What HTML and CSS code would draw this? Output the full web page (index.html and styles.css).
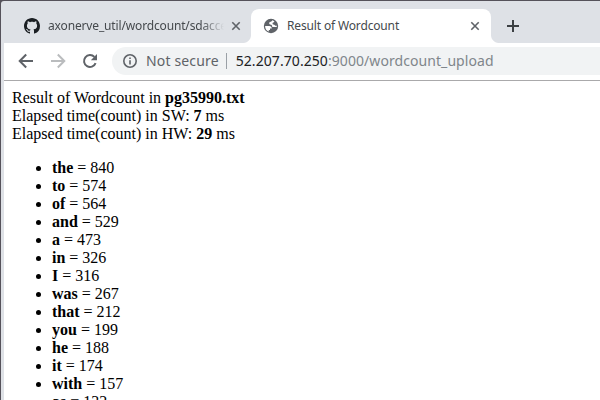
FILE: index.html
```html
<!DOCTYPE html>
<html lang="en">
<head>
<meta charset="utf-8">
<title>Result of Wordcount</title>
<link rel="stylesheet" href="styles.css">
</head>
<body>
<div class="window">
  <header class="tabs">
    <div class="tab">
      <svg class="favicon" viewBox="0 0 16 16"><path fill="#1b1f23" d="M8 0C3.58 0 0 3.58 0 8c0 3.54 2.29 6.53 5.47 7.59.4.07.55-.17.55-.38 0-.19-.01-.82-.01-1.49-2.01.37-2.53-.49-2.69-.94-.09-.23-.48-.94-.82-1.13-.28-.15-.68-.52-.01-.53.63-.01 1.08.58 1.23.82.72 1.21 1.87.87 2.33.66.07-.52.28-.87.51-1.07-1.78-.2-3.64-.89-3.64-3.95 0-.87.31-1.59.82-2.15-.08-.2-.36-1.02.08-2.12 0 0 .67-.21 2.2.82.64-.18 1.32-.27 2-.27s1.36.09 2 .27c1.53-1.04 2.2-.82 2.2-.82.44 1.1.16 1.92.08 2.12.51.56.82 1.27.82 2.15 0 3.07-1.87 3.75-3.65 3.95.29.25.54.73.54 1.48 0 1.07-.01 1.93-.01 2.2 0 .21.15.46.55.38A8.01 8.01 0 0 0 16 8c0-4.42-3.58-8-8-8z"/></svg>
      <span class="tab-title faded">axonerve_util/wordcount/sdaccel</span>
      <svg class="close" viewBox="0 0 10 10"><path d="M1.3 1.3l7.4 7.4M8.7 1.3L1.3 8.7"/></svg>
    </div>
    <div class="tab active">
      <svg class="favicon" viewBox="0 0 16 16"><circle cx="8" cy="8" r="7.2" fill="#5f6368"/><path fill="#fff" d="M9.2 2.2c-.1.9-.7 1.4-1.5 1.5-1.1.1-1.5.8-1.5 1.6 0 1 .8 1.4 1.8 1.5.8.1.9.5 1 1.1.1.8.7 1.2 1.5 1.2h3.2c.1-.6.2-1 .1-1.6-.7.4-1.5.3-1.9-.3-.3-.6-.9-.8-1.6-.8-.5 0-.8-.4-.8-.9 0-.7.4-1 1-1.1.6-.1.8-.5.8-1.2-.6-.5-1.3-.8-2.1-1zM2.1 8h4.1c1.7 0 2.6.9 2.6 2.4H7v1.5H5.8v1.7A6 6 0 0 1 2.1 8z"/></svg>
      <span class="tab-title">Result of Wordcount</span>
      <svg class="close" viewBox="0 0 10 10"><path d="M1.3 1.3l7.4 7.4M8.7 1.3L1.3 8.7"/></svg>
    </div>
    <svg class="new-tab" viewBox="0 0 12 12"><path d="M6 0v12M0 6h12"/></svg>
  </header>
  <nav class="toolbar">
    <svg class="nav-icon" viewBox="0 0 16 16"><path d="M15 8H2M8.2 1.5L1.7 8l6.5 6.5"/></svg>
    <svg class="nav-icon disabled" viewBox="0 0 16 16"><path d="M1 8h13M7.8 1.5L14.3 8l-6.5 6.5"/></svg>
    <svg class="nav-icon" viewBox="0 0 16 16"><path d="M13.6 10.2A6 6 0 1 1 12.4 3.9"/><path class="solid" d="M15 1v6.2H8.8z"/></svg>
    <div class="omnibox">
      <svg class="info" viewBox="0 0 14 14"><circle cx="7" cy="7" r="6.2"/><path d="M7 6.2v4.3M7 3.5v1.6"/></svg>
      <span class="security">Not secure</span>
      <span class="divider"></span>
      <span class="url"><span class="host">52.207.70.250</span>:9000/wordcount_upload</span>
    </div>
  </nav>
  <main class="page">
    Result of Wordcount in <b>pg35990.txt</b><br>
    Elapsed time(count) in SW: <b>7</b> ms<br>
    Elapsed time(count) in HW: <b>29</b> ms
    <ul>
      <li><b>the</b> = 840</li>
      <li><b>to</b> = 574</li>
      <li><b>of</b> = 564</li>
      <li><b>and</b> = 529</li>
      <li><b>a</b> = 473</li>
      <li><b>in</b> = 326</li>
      <li><b>I</b> = 316</li>
      <li><b>was</b> = 267</li>
      <li><b>that</b> = 212</li>
      <li><b>you</b> = 199</li>
      <li><b>he</b> = 188</li>
      <li><b>it</b> = 174</li>
      <li><b>with</b> = 157</li>
      <li><b>as</b> = 132</li>
    </ul>
  </main>
</div>
</body>
</html>
```

FILE: styles.css
```css
* { box-sizing: border-box; }
html { background: #55525a; }
body { margin: 0; height: 400px; overflow: hidden; }
svg { flex: none; fill: none; }
.window {
  height: 400px;
  margin: 1px 0 0 1px;
  padding-left: 3px;
  background: #dee1e6;
  border-radius: 3px 0 0 0;
  overflow: hidden;
}
.tabs {
  display: flex;
  height: 42px;
  padding-top: 8px;
  font: 12px/34px "Noto Sans", sans-serif;
  letter-spacing: -0.15px;
  color: #45494d;
}
.tab { display: flex; align-items: center; width: 247px; padding: 0 10px 0 20px; }
.tab.active {
  position: relative;
  width: 240px;
  padding: 0 11px 0 12px;
  background: #fff;
  border-radius: 8px 8px 0 0;
}
.tab.active::before, .tab.active::after {
  content: "";
  position: absolute;
  bottom: 0;
  width: 8px;
  height: 8px;
}
.tab.active::before { left: -8px; background: radial-gradient(circle at 0 0, transparent 7.5px, #fff 8.5px); }
.tab.active::after { right: -8px; background: radial-gradient(circle at 100% 0, transparent 7.5px, #fff 8.5px); }
.favicon { width: 16px; height: 16px; margin-right: 8px; }
.tab-title { flex: 1; min-width: 0; overflow: hidden; white-space: nowrap; margin-right: 7px; }
.faded { -webkit-mask-image: linear-gradient(to right, #000 153px, transparent 176px); mask-image: linear-gradient(to right, #000 153px, transparent 176px); }
.close { width: 10px; height: 10px; stroke: #5f6368; stroke-width: 1.6; }
.new-tab { width: 12px; height: 12px; margin: 11px 0 0 16px; stroke: #3c4043; stroke-width: 2; }
.toolbar {
  display: flex;
  align-items: center;
  height: 38px;
  padding: 0 0 1px 14px;
  background: #fff;
  border-bottom: 1px solid #aaa9ab;
}
.nav-icon { width: 16px; height: 16px; margin-right: 16px; stroke: #5f6368; stroke-width: 2; }
.disabled { stroke: #babcbe; }
.solid { fill: #5f6368; stroke: none; }
.omnibox {
  flex: 1;
  display: flex;
  align-items: center;
  height: 28px;
  margin-left: -2px;
  padding-left: 11px;
  background: #f1f3f4;
  border-radius: 14px 0 0 14px;
  font: 14px/26px "Noto Sans", sans-serif;
  color: #5f6368;
  white-space: nowrap;
}
.info { width: 14px; height: 14px; margin-right: 9px; stroke: #5f6368; stroke-width: 1.6; }
.security { letter-spacing: 0.15px; }
.security, .url { padding-bottom: 1px; }
.divider { width: 1px; height: 16px; margin: 0 9px 0 7px; background: #9aa0a6; }
.url { color: #80868b; letter-spacing: 0.07px; }
.host { color: #202124; }
.page {
  height: 320px;
  padding: 8px;
  background: #fff;
  color: #000;
  font: 16px/18px "Liberation Serif", serif;
}
.page ul { margin: 16px 0; padding-left: 40px; }
```
